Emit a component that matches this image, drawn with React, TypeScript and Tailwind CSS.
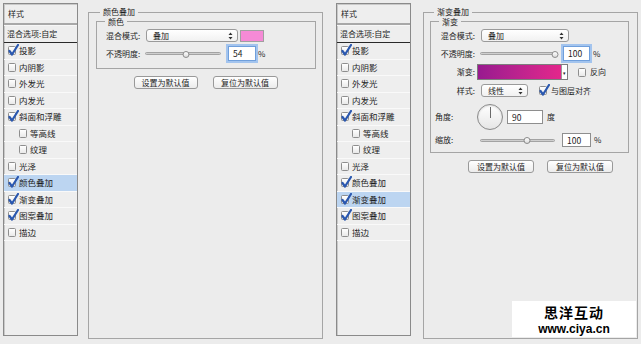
import React from "react";

type Item = { label: string; checked: boolean; indent?: boolean };

const items: Item[] = [
	{ label: "投影", checked: true },
	{ label: "内阴影", checked: false },
	{ label: "外发光", checked: false },
	{ label: "内发光", checked: false },
	{ label: "斜面和浮雕", checked: true },
	{ label: "等高线", checked: false, indent: true },
	{ label: "纹理", checked: false, indent: true },
	{ label: "光泽", checked: false },
	{ label: "颜色叠加", checked: true },
	{ label: "渐变叠加", checked: true },
	{ label: "图案叠加", checked: true },
	{ label: "描边", checked: false },
];

function Check({ checked }: { checked: boolean }) {
	return (
		<span className="relative inline-block h-[9px] w-[8px] shrink-0 rounded-[1.5px] border border-[#8e8e8e] bg-gradient-to-b from-white to-[#e9e9e9]">
			{checked && (
				<svg
					className="absolute left-[-1px] top-[-3px]"
					width="11"
					height="12"
					viewBox="0 0 11 12"
				>
					<path
						d="M1.5 7 L4 10.5 L10 1"
						fill="none"
						stroke="#2a58b0"
						strokeWidth="2.2"
						strokeLinecap="round"
						strokeLinejoin="round"
					/>
				</svg>
			)}
		</span>
	);
}

function StyleList({ active }: { active: string }) {
	return (
		<div className="flex h-[333px] w-[75px] shrink-0 flex-col border border-[#8a8a8a] bg-[#eeeeee] shadow-[inset_1px_1px_0_#c9c9c9]">
			<div className="flex h-[19px] items-center pl-[4px] text-[8px]">样式</div>
			<div className="h-[3px] border-b border-[#f7f7f7] bg-[#a8a8a8]" />
			<div className="flex h-[17px] items-center border-b border-[#2a2a2a] pl-[3px] text-[8px]">
				混合选项:自定
			</div>
			{items.map((it) => (
				<div
					key={it.label}
					className={
						"flex h-[16.5px] items-center border-b border-[#f9f9f9] text-[8.5px] " +
						(it.indent ? "pl-[15px] " : "pl-[4px] ") +
						(it.label === active ? "bg-[#bcd5f1]" : "")
					}
				>
					<Check checked={it.checked} />
					<span className="ml-[3px]">{it.label}</span>
				</div>
			))}
		</div>
	);
}

function Arrows() {
	return (
		<svg width="5" height="8" viewBox="0 0 5 8">
			<path d="M2.5 0.5 L4.5 3 L0.5 3 Z M0.5 5 L4.5 5 L2.5 7.5 Z" fill="#333" />
		</svg>
	);
}

function Select({ value, className }: { value: string; className: string }) {
	return (
		<div
			className={
				"flex h-[13px] items-center justify-between rounded-[3px] border border-[#9a9a9a] bg-gradient-to-b from-white to-[#f1f1f1] pl-[6px] pr-[4px] text-[8px] " +
				className
			}
		>
			<span>{value}</span>
			<Arrows />
		</div>
	);
}

function Slider({ pos, className }: { pos: string; className: string }) {
	return (
		<div className={"relative flex h-[10px] items-center " + className}>
			<div className="h-[3px] w-full rounded-full border border-[#a3a3a3] bg-[#cfcfcf]" />
			<div
				className="absolute top-[2px] h-[7px] w-[7px] -translate-x-1/2 rounded-full border border-[#8c8c8c] bg-gradient-to-b from-white to-[#dcdcdc]"
				style={{ left: pos }}
			/>
		</div>
	);
}

function Field({ value, focus, className }: { value: string; focus?: boolean; className: string }) {
	return (
		<div
			className={
				"flex items-center bg-white pl-[4px] text-[8.5px] " +
				(focus
					? "border border-[#6f9fdc] shadow-[0_0_0_2px_#a3c4ee]"
					: "border border-[#8e8e8e]") +
				" " +
				className
			}
		>
			{value}
		</div>
	);
}

function Button({ label, className }: { label: string; className: string }) {
	return (
		<div
			className={
				"flex h-[13px] items-center justify-center rounded-[3px] border border-[#999] bg-gradient-to-b from-white to-[#ececec] text-[8px] " +
				className
			}
		>
			{label}
		</div>
	);
}

function ColorPanel() {
	return (
		<fieldset className="ml-[10px] mt-[4px] h-[332px] w-[235px] shrink-0 border border-[#a5a5a5]">
			<legend className="ml-[11px] px-[3px] text-[8px] leading-[10px]">颜色叠加</legend>
			<fieldset className="ml-[7px] mr-[6px] h-[52px] border border-[#a5a5a5]">
				<legend className="ml-[8px] px-[3px] text-[8px] leading-[9px]">颜色</legend>
				<div className="flex items-center pl-[9px] pt-[3px] text-[8px]">
					<span className="w-[40px]">混合模式:</span>
					<Select value="叠加" className="w-[92px]" />
					<div className="ml-[2px] h-[12px] w-[24px] border border-[#a0a0a0] bg-[#f58ad6]" />
				</div>
				<div className="mt-[4px] flex items-center pl-[9px] text-[8px]">
					<span className="w-[39px]">不透明度:</span>
					<Slider pos="54%" className="w-[76px]" />
					<Field value="54" focus className="ml-[7px] h-[15px] w-[28px]" />
					<span className="ml-[2px]">%</span>
				</div>
			</fieldset>
			<div className="mt-[7px] flex justify-center gap-[15px]">
				<Button label="设置为默认值" className="w-[64px]" />
				<Button label="复位为默认值" className="w-[65px]" />
			</div>
		</fieldset>
	);
}

function GradientPanel() {
	return (
		<fieldset className="ml-[12px] mt-[4px] h-[332px] w-[215px] shrink-0 border border-[#a5a5a5]">
			<legend className="ml-[10px] px-[3px] text-[8px] leading-[10px]">渐变叠加</legend>
			<fieldset className="ml-[6px] mr-[8px] h-[136px] border border-[#a5a5a5]">
				<legend className="ml-[8px] px-[3px] text-[8px] leading-[9px]">渐变</legend>
				<div className="flex items-center pt-[3px] text-[8px]">
					<span className="w-[44px] text-right">混合模式:</span>
					<Select value="叠加" className="ml-[6px] w-[88px]" />
				</div>
				<div className="mt-[4px] flex items-center text-[8px]">
					<span className="w-[44px] text-right">不透明度:</span>
					<Slider pos="98%" className="ml-[5px] w-[77px]" />
					<Field value="100" focus className="ml-[6px] h-[15px] w-[27px]" />
					<span className="ml-[3px]">%</span>
				</div>
				<div className="mt-[3px] flex items-center text-[8px]">
					<span className="w-[44px] text-right">渐变:</span>
					<div className="ml-[2px] flex h-[16px] border border-[#7d7d7d]">
						<div className="w-[83px] bg-gradient-to-r from-[#981a8f] to-[#e4268b]" />
						<div className="flex w-[6px] items-center justify-center border-l border-[#9a9a9a] bg-white text-[5px] leading-none">
							▾
						</div>
					</div>
					<span className="ml-[10px] flex">
						<Check checked={false} />
					</span>
					<span className="ml-[4px]">反向</span>
				</div>
				<div className="mt-[4px] flex items-center text-[8px]">
					<span className="w-[44px] text-right">样式:</span>
					<Select value="线性" className="ml-[6px] w-[47px]" />
					<span className="ml-[11px] flex">
						<Check checked />
					</span>
					<span className="ml-[4px]">与图层对齐</span>
				</div>
				<div className="mt-[7px] flex items-center pl-[4px] text-[8px]">
					<span className="w-[42px]">角度:</span>
					<div className="relative h-[26px] w-[26px] rounded-full border border-[#8a8a8a] bg-gradient-to-b from-white to-[#e6e6e6] shadow-[inset_0_1px_2px_rgba(0,0,0,0.15)]">
						<div className="absolute left-[12px] top-[2px] h-[11px] w-[1px] bg-[#6a6a6a]" />
					</div>
					<Field value="90" className="ml-[4px] h-[14px] w-[36px]" />
					<span className="ml-[4px]">度</span>
				</div>
				<div className="mt-[3px] flex items-center pl-[4px] text-[8px]">
					<span className="w-[45px]">缩放:</span>
					<Slider pos="63%" className="w-[75px]" />
					<Field value="100" className="ml-[7px] h-[14px] w-[29px]" />
					<span className="ml-[3px]">%</span>
				</div>
			</fieldset>
			<div className="ml-[44px] mt-[7px] flex gap-[13px]">
				<Button label="设置为默认值" className="w-[66px]" />
				<Button label="复位为默认值" className="w-[66px]" />
			</div>
		</fieldset>
	);
}

export default function App() {
	return (
		<div className="relative flex h-[344px] w-[641px] items-start overflow-hidden bg-[#ececec] pl-[3px] pt-[3px] font-['Noto_Sans_CJK_SC','Noto_Sans',sans-serif] text-[#1d1d1d]">
			<StyleList active="颜色叠加" />
			<ColorPanel />
			<div className="ml-[13px]">
				<StyleList active="渐变叠加" />
			</div>
			<GradientPanel />

			<div className="absolute left-[512px] top-[301px] flex h-[36px] w-[124px] flex-col items-center justify-center bg-white">
				<span className="text-[14px] font-bold leading-[20px] tracking-[1px] text-black">思洋互动</span>
				<span className="font-['Liberation_Sans',sans-serif] text-[12px] font-bold leading-[14px] text-black">
					www.ciya.cn
				</span>
			</div>
		</div>
	);
}
